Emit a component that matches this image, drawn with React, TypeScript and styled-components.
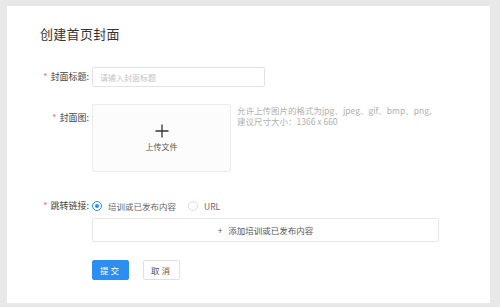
import React from "react";
import styled, { createGlobalStyle } from "styled-components";

const Global = createGlobalStyle`
  html, body { margin: 0; padding: 0; background: #e6e6e6; }
  body { font-family: "Noto Sans CJK SC", "Noto Sans", sans-serif; }
  #root { width: 500px; height: 307px; overflow: hidden; }
`;

const Page = styled.div`
  width: 500px;
  height: 307px;
  box-sizing: border-box;
  padding: 6px 10px 4px 7px;
  background: #e8e8e8;
  display: flex;
`;

const Card = styled.div`
  flex: 1;
  background: #fff;
  padding: 18px 0 0 33px;
  display: flex;
  flex-direction: column;
`;

const Title = styled.h1`
  margin: 0;
  font-size: 13px;
  line-height: 20px;
  font-weight: 400;
  color: #333;
  letter-spacing: 0.3px;
`;

const Row = styled.div<{ $mt: number; $align?: string }>`
  display: flex;
  align-items: ${(p) => p.$align || "center"};
  margin-top: ${(p) => p.$mt}px;
`;

const Label = styled.div<{ $pt?: number }>`
  width: 49px;
  margin-right: 3px;
  text-align: right;
  font-size: 9px;
  color: #444;
  white-space: nowrap;
  padding-top: ${(p) => p.$pt || 0}px;
  line-height: 12px;
`;

const Star = styled.span`
  color: #f26d6d;
  margin-right: 3px;
  font-size: 9px;
`;

const Input = styled.div`
  width: 164px;
  height: 18px;
  border: 1px solid #e2e2e2;
  border-radius: 2px;
  display: flex;
  align-items: center;
  padding-left: 7px;
  font-size: 8px;
  color: #c4c4c4;
`;

const Upload = styled.div`
  width: 137px;
  height: 66px;
  border: 1px solid #ececec;
  border-radius: 2px;
  background: #fcfcfc;
  display: flex;
  flex-direction: column;
  align-items: center;
  justify-content: center;
  gap: 3px;
  font-size: 8px;
  color: #555;
`;

const Hint = styled.div`
  margin-left: 6px;
  margin-top: 1px;
  font-size: 8.5px;
  line-height: 11px;
  color: #b0b0b0;
  white-space: nowrap;
`;

const Indent = styled.div`
  padding-left: 52px;
  display: flex;
  flex-direction: column;
`;

const RadioGroup = styled.div`
  display: flex;
  align-items: center;
  font-size: 8.5px;
  color: #666;
`;

const RadioItem = styled.label`
  display: flex;
  align-items: center;
  margin-right: 12px;
`;

const Circle = styled.span<{ $on?: boolean }>`
  width: 8px;
  height: 8px;
  border-radius: 50%;
  border: 1px solid ${(p) => (p.$on ? "#2b8ef0" : "#dcdcdc")};
  margin-right: 6px;
  display: flex;
  align-items: center;
  justify-content: center;
  &::after {
    content: "";
    width: 4px;
    height: 4px;
    border-radius: 50%;
    background: ${(p) => (p.$on ? "#2b8ef0" : "transparent")};
  }
`;

const AddBox = styled.div`
  margin-top: 6px;
  width: 345px;
  height: 22px;
  border: 1px solid #e8e8e8;
  border-radius: 2px;
  display: flex;
  align-items: center;
  justify-content: center;
  font-size: 8.5px;
  color: #555;
  gap: 6px;
`;

const Buttons = styled.div`
  display: flex;
  gap: 14px;
  margin-top: 18px;
`;

const Button = styled.button<{ $primary?: boolean }>`
  width: 37px;
  height: 20px;
  padding: 0;
  border-radius: 2px;
  font-family: inherit;
  font-size: 8.5px;
  letter-spacing: 2px;
  border: 1px solid ${(p) => (p.$primary ? "#2b8ef0" : "#e0e0e0")};
  background: ${(p) => (p.$primary ? "#2b8ef0" : "#fff")};
  color: ${(p) => (p.$primary ? "#fff" : "#555")};
`;

const Plus = () => (
  <svg width="14" height="14" viewBox="0 0 14 14">
    <path d="M7 0.5V13.5M0.5 7H13.5" stroke="#333" strokeWidth="1.3" />
  </svg>
);

export default function App() {
  return (
    <>
      <Global />
      <Page>
        <Card>
          <Title>创建首页封面</Title>
          <Row $mt={23}>
            <Label>
              <Star>*</Star>封面标题:
            </Label>
            <Input>请输入封面标题</Input>
          </Row>
          <Row $mt={17} $align="flex-start">
            <Label $pt={8}>
              <Star>*</Star>封面图:
            </Label>
            <Upload>
              <Plus />
              <span>上传文件</span>
            </Upload>
            <Hint>
              允许上传图片的格式为jpg、jpeg、gif、bmp、png,
              <br />
              建议尺寸大小：1366 x 660
            </Hint>
          </Row>
          <Row $mt={28}>
            <Label>
              <Star>*</Star>跳转链接:
            </Label>
            <RadioGroup>
              <RadioItem>
                <Circle $on />
                培训或已发布内容
              </RadioItem>
              <RadioItem>
                <Circle />
                URL
              </RadioItem>
            </RadioGroup>
          </Row>
          <Indent>
            <AddBox>
              <span>+</span>
              <span>添加培训或已发布内容</span>
            </AddBox>
            <Buttons>
              <Button $primary>提交</Button>
              <Button>取消</Button>
            </Buttons>
          </Indent>
        </Card>
      </Page>
    </>
  );
}
